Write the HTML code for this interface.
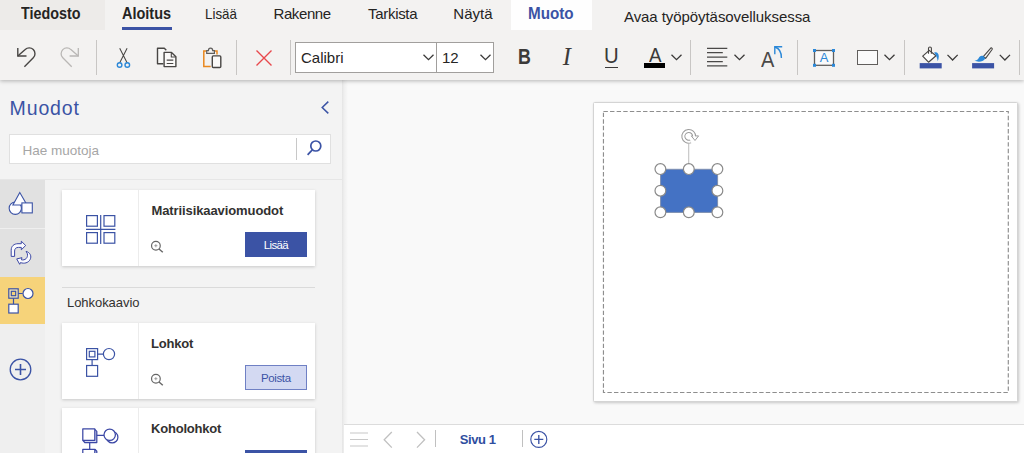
<!DOCTYPE html>
<html lang="fi">
<head>
<meta charset="utf-8">
<title>Visio</title>
<style>
*{box-sizing:border-box;margin:0;padding:0}
html,body{width:1024px;height:453px;overflow:hidden;background:#f9f9f9;font-family:"Liberation Sans",sans-serif;color:#252423}
.abs{position:absolute}
.t{position:absolute;white-space:nowrap;line-height:1}
#ribbon{position:absolute;left:0;top:0;width:1024px;height:80px;background:#f3f2f1;box-shadow:0 1px 4px rgba(0,0,0,.28);z-index:5}
.tabbg{position:absolute;top:0;height:30px}
.sep{position:absolute;top:40px;height:35px;width:1px;background:#c8c6c4}
svg{position:absolute;overflow:visible}
#panel{position:absolute;left:0;top:80px;width:342px;height:373px;background:#f3f3f3}
.card{position:absolute;left:62px;width:253px;background:#fff;box-shadow:0 1px 3px rgba(0,0,0,.18)}
.card .dv{position:absolute;left:76px;top:0;bottom:0;width:1px;background:#ececec}
.btn{position:absolute;left:183.200px;width:61.400px;height:24.500px;font-size:11.500px;text-align:center;line-height:27px;letter-spacing:-.6px}
.btn.add{background:#3b53a5;color:#fff}
.btn.rem{background:#d3d9f2;color:#3b53a5;border:1px solid #6f80c4;line-height:25.500px;height:25px;letter-spacing:-.4px}
</style>
</head>
<body>
<!-- RIBBON -->
<div id="ribbon">
  <div class="tabbg" style="left:0;width:105px;background:#edebe9"></div>
  <div class="tabbg" style="left:511px;width:81px;background:#fefefe"></div>
  <span class="t" id="t1" style="left:20.700px;top:6.400px;font-size:16px;font-weight:bold;transform:scaleX(.896);transform-origin:0 0">Tiedosto</span>
  <span class="t" id="t2" style="left:122.200px;top:6.400px;font-size:16px;font-weight:bold;transform:scaleX(.904);transform-origin:0 0">Aloitus</span>
  <div class="abs" style="left:122px;top:27px;width:50px;height:3px;background:#3b53a5"></div>
  <span class="t" id="t3" style="left:205.200px;top:6px;font-size:15px;transform:scaleX(.89);transform-origin:0 0">Lisää</span>
  <span class="t" id="t4" style="left:273.500px;top:6px;font-size:15px;letter-spacing:-.4px">Rakenne</span>
  <span class="t" id="t5" style="left:368px;top:6px;font-size:15px;letter-spacing:-.3px">Tarkista</span>
  <span class="t" id="t6" style="left:453.300px;top:6px;font-size:15px">Näytä</span>
  <span class="t" id="t7" style="left:528.300px;top:6.400px;font-size:16px;font-weight:bold;color:#3b53a5;transform:scaleX(.952);transform-origin:0 0">Muoto</span>
  <span class="t" id="t8" style="left:624px;top:9px;font-size:15px;letter-spacing:-.07px">Avaa työpöytäsovelluksessa</span>

  <div class="sep" style="left:96px"></div>
  <div class="sep" style="left:236px"></div>
  <div class="sep" style="left:290px"></div>
  <div class="sep" style="left:690px"></div>
  <div class="sep" style="left:797px"></div>
  <div class="sep" style="left:904px"></div>
  <div class="sep" style="left:1019px"></div>

  <!-- undo redo cut copy paste -->
  <svg style="left:0;top:40px" width="236" height="36" viewBox="0 40 236 36" fill="none" stroke-linecap="butt">
    <g stroke="#484644" stroke-width="1.400">
      <path d="M17.800 47.900V56H26.500"/>
      <path d="M17.800 56L25.200 49.600A5.600 5.600 0 0 1 33.300 57.700L24.400 66.800"/>
    </g>
    <g stroke="#b9b7b5" stroke-width="1.300">
      <path d="M78.300 47.900V56H69.600"/>
      <path d="M78.300 56L70.900 49.600A5.600 5.600 0 0 0 62.800 57.700L71.700 66.800"/>
    </g>
    <!-- cut -->
    <path d="M119.700 48.200L127.200 63M127.100 48.200L119.600 63" stroke="#484644" stroke-width="1.050"/>
    <circle cx="119.600" cy="65" r="2.300" stroke="#2b88d8" stroke-width="1.400"/>
    <circle cx="127.300" cy="65" r="2.300" stroke="#2b88d8" stroke-width="1.400"/>
    <!-- copy -->
    <g stroke="#484644" stroke-width="1.400" stroke-linejoin="round">
      <path d="M163.400 63.800H157.500V48.300H164.300L166.300 50.300" fill="#f8f8f7"/>
      <path d="M164.100 52.400H171.500L175.900 56.800V66.600H164.100Z" fill="#faf9f8"/>
      <path d="M171.300 52.600V57H175.700" stroke-width="1.100"/>
      <path d="M166.700 60.100H173.300M166.700 63.500H173.300" stroke-width="1.150"/>
    </g>
    <!-- paste -->
    <path d="M210.700 66.600H203.800V50.900H206.500M214.300 50.900H217V54.500" stroke="#e8871e" stroke-width="1.500"/>
    <path d="M206.700 53.300V50.700H208.400C208.400 49 209.500 48.100 210.550 48.100S212.700 49 212.700 50.700H214.400V53.300Z" stroke="#605e5c" stroke-width="1.200" fill="#f3f2f1"/>
    <rect x="212.300" y="55.900" width="8.500" height="11.600" rx="1" stroke="#484644" stroke-width="1.400" fill="#faf9f8"/>
  </svg>
  <!-- delete X -->
  <svg style="left:256px;top:50px" width="16" height="16" viewBox="0 0 16 16" fill="none" stroke="#e8484c" stroke-width="1.400">
    <path d="M.500 .500l15 15M15.500 .500l-15 15"/>
  </svg>
  <!-- font box -->
  <div class="abs" style="left:295px;top:42px;width:199px;height:31px;background:#fff;border:1px solid #a19f9d"></div>
  <div class="abs" style="left:436px;top:42px;width:1px;height:31px;background:#a19f9d"></div>
  <span class="t" id="t9" style="left:301px;top:49.500px;font-size:15px">Calibri</span>
  <span class="t" id="t10" style="left:442px;top:49.500px;font-size:15px">12</span>
  <svg class="chev" style="left:423px;top:54px" width="11" height="7" viewBox="0 0 11 7" fill="none" stroke="#3b3a39" stroke-width="1.300"><path d="M.500 .700l5 5 5-5"/></svg>
  <svg class="chev" style="left:480px;top:54px" width="11" height="7" viewBox="0 0 11 7" fill="none" stroke="#3b3a39" stroke-width="1.300"><path d="M.500 .700l5 5 5-5"/></svg>
  <!-- B I U -->
  <span class="t" id="tB" style="left:518.400px;top:46.200px;font-size:21.700px;font-weight:bold;color:#3b3a39;transform:scaleX(.82);transform-origin:0 0">B</span>
  <span class="t" id="tI" style="left:562.700px;top:45.300px;font-size:24.500px;font-style:italic;font-family:'Liberation Serif',serif;color:#3b3a39">I</span>
  <span class="t" id="tU" style="left:603.500px;top:46.100px;font-size:21.400px;color:#3b3a39;transform:scaleX(.95);transform-origin:0 0">U</span>
  <div class="abs" style="left:605px;top:66.700px;width:13px;height:1px;background:#3b3a39"></div>
  <!-- font color -->
  <span class="t" id="tA" style="left:648.700px;top:45.500px;font-size:19.500px;color:#3b3a39;transform:scaleX(.96);transform-origin:0 0">A</span>
  <div class="abs" style="left:643.700px;top:62.900px;width:21.800px;height:5.300px;background:#000"></div>
  <svg class="chev" style="left:671px;top:54px" width="11" height="7" viewBox="0 0 11 7" fill="none" stroke="#3b3a39" stroke-width="1.300"><path d="M.500 .700l5 5 5-5"/></svg>
  <!-- align -->
  <svg style="left:707px;top:47px" width="21" height="20" viewBox="0 0 21 20" fill="none" stroke="#4a4948" stroke-width="1.250"><path d="M0 1.300h20.300M0 5.600h15.800M0 10.100h20.300M0 14.500h15.800M0 18.900h20.300"/></svg>
  <svg class="chev" style="left:733.500px;top:54px" width="11" height="7" viewBox="0 0 11 7" fill="none" stroke="#3b3a39" stroke-width="1.300"><path d="M.500 .700l5 5 5-5"/></svg>
  <!-- A with arrow -->
  <span class="t" id="tA2" style="left:760.700px;top:50px;font-size:21.500px;color:#4a4948;transform:scaleX(.93);transform-origin:0 0">A</span>
  <svg style="left:774px;top:46px" width="10" height="13" viewBox="0 0 10 13" fill="none" stroke="#2b88d8" stroke-width="1.400"><path d="M.800 8.200V.800h7.400"/><path d="M1 1C5.500 2.500 7.500 6 7.400 12"/></svg>
  <!-- text box -->
  <svg style="left:813.200px;top:48.800px" width="22" height="18" viewBox="0 0 22 18" fill="none">
    <rect x="1.500" y="1.500" width="19" height="14.800" stroke="#605e5c" stroke-width="1.300" fill="#fafafa"/>
    <g fill="#2b88d8"><rect x="0" y="0" width="3" height="3"/><rect x="19" y="0" width="3" height="3"/><rect x="0" y="14.800" width="3" height="3"/><rect x="19" y="14.800" width="3" height="3"/></g>
    <text x="11.100" y="13.400" font-size="13" text-anchor="middle" fill="#2b88d8" font-family="Liberation Sans, sans-serif">A</text>
  </svg>
  <!-- rect -->
  <div class="abs" style="left:857.300px;top:49.700px;width:20.600px;height:15.600px;border:1.400px solid #605e5c;background:#fafafa"></div>
  <svg class="chev" style="left:884px;top:54px" width="11" height="7" viewBox="0 0 11 7" fill="none" stroke="#3b3a39" stroke-width="1.300"><path d="M.500 .700l5 5 5-5"/></svg>
  <!-- fill -->
  <svg style="left:910px;top:40px" width="114" height="36" viewBox="910 40 114 36" fill="none">
    <path d="M929.200 50.400L922.700 56.100L928.500 62.200L936 55.700Z" stroke="#484644" stroke-width="1.200" fill="#fdfdfd" stroke-linejoin="round"/>
    <path d="M928.500 53.800V48.300C928.500 46.600 931.400 46.600 931.400 48.300V53.800" stroke="#484644" stroke-width="1.100"/>
    <path d="M934.100 52.600C936.600 51.300 938.900 53.200 938.800 56.400C938.700 58.300 938.300 59.900 937.700 61.300C937.300 58.300 936.500 55.800 934.100 52.600Z" fill="#2b88d8"/>
    <rect x="919.700" y="63.100" width="22" height="5.300" fill="#3b53a5"/>
    <!-- brush -->
    <path d="M991.200 47.700C992.200 48.200 992.500 48.800 992.100 49.500L985.600 58.300L983.300 56.600Z" stroke="#484644" stroke-width="1.100" fill="#f3f2f1" stroke-linejoin="round"/>
    <path d="M983.200 56.100C981 55.300 979.400 56.600 978.600 58.200C977.800 59.700 976.300 60.600 974.500 60.600C977.500 62.400 982.900 62.300 985.300 58.600Z" fill="#2b88d8"/>
    <rect x="972.100" y="63.100" width="22" height="5.300" fill="#3b53a5"/>
    <g stroke="#3b3a39" stroke-width="1.300"><path d="M947.500 54.900l5.100 5.100 5.100-5.100"/><path d="M999.800 54.900l5.100 5.100 5.100-5.100"/></g>
  </svg>
</div>

<!-- LEFT PANEL -->
<div id="panel">
  <span class="t" id="p1" style="left:9.600px;top:18.500px;font-size:19.500px;color:#3b53a5;letter-spacing:.85px">Muodot</span>
  <svg style="left:321px;top:21.400px" width="8" height="13" viewBox="0 0 8 13" fill="none" stroke="#3b53a5" stroke-width="1.500"><path d="M7.300 .600L1.200 6.500l6.100 5.900"/></svg>
  <div class="abs" style="left:8.500px;top:53.700px;width:322.200px;height:30.500px;background:#fff;border:1px solid #e0e0e0"></div>
  <span class="t" id="p2" style="left:22.500px;top:63.500px;font-size:13.500px;color:#a6a6a6">Hae muotoja</span>
  <div class="abs" style="left:296px;top:58px;width:1px;height:22px;background:#c8c8c8"></div>
  <svg style="left:307.200px;top:60.200px" width="15" height="16" viewBox="0 0 15 16" fill="none" stroke="#3b53a5" stroke-width="1.700"><circle cx="8.800" cy="6" r="5"/><path d="M5.300 9.800L.600 14.800"/></svg>
  <div class="abs" style="left:0;top:99px;width:342px;height:1px;background:#e6e6e6"></div>
  <!-- side nav -->
  <div class="abs" style="left:0;top:100px;width:44.500px;height:273px;background:#efefef"></div>
  <div class="abs" style="left:0;top:100px;width:44.500px;height:47.500px;background:#e1e1e1"></div>
  <div class="abs" style="left:0;top:148.500px;width:44.500px;height:48.500px;background:#e1e1e1"></div>
  <div class="abs" style="left:0;top:197px;width:44.500px;height:47px;background:#f6d37a"></div>

  <!-- side icons -->
  <svg style="left:4px;top:106px" width="36" height="38" viewBox="4 186 36 38" fill="#fdfdff" stroke="#3b53a5" stroke-width="1.100" stroke-linejoin="miter">
    <circle cx="15.300" cy="208.200" r="6.150"/>
    <path d="M19.800 192.500L12.900 205H27L19.800 192.500Z"/>
    <rect x="21.900" y="202.900" width="10.400" height="10"/>
  </svg>
  <svg style="left:4px;top:154px" width="36" height="38" viewBox="4 234 36 38" fill="#fbfbfe" stroke="#3b47a5" stroke-width="1" stroke-linejoin="round">
    <path d="M11.200 256.400V250.200C11.200 246 14 243.700 18 243.700H21.300V241.200L25.700 245.500L21.300 249.800V247.400H18.500C16 247.400 14.600 248.600 14.600 251V256.400Z"/>
    <path d="M16.700 258.900L22 257.700L21.400 259.800C25 260.600 28.200 258 27.400 253.800L26.100 251.300C30.200 252.600 31.900 256.200 30.100 259.600C28.200 263 24.200 263.900 20.500 262.600L19.700 264.300Z"/>
  </svg>
  <svg style="left:8px;top:208px" width="26" height="26" viewBox="0 0 26 26" fill="none" stroke="#3b53a5" stroke-width="1.200">
    <rect x=".800" y=".800" width="9.400" height="9.400" fill="#fbe9b8"/><rect x="3.300" y="3.300" width="4.400" height="4.400" fill="#f6d37a"/>
    <path d="M10.200 5.500h4.500M5.500 10.200v6"/>
    <circle cx="20" cy="5.500" r="5" fill="#fff"/>
    <rect x=".800" y="16.200" width="9.400" height="8.800" fill="#fff"/>
  </svg>
  <svg style="left:8.200px;top:277.100px" width="25" height="25" viewBox="0 0 25 25" fill="none" stroke="#3b53a5" stroke-width="1.300">
    <circle cx="12.500" cy="12.500" r="10.300"/><path d="M12.500 7v11M7 12.500h11" stroke-width="1.600"/>
  </svg>

  <!-- card 1 -->
  <div class="card" style="top:110px;height:76px">
    <div class="dv"></div>
    <svg style="left:24px;top:25px" width="30" height="29" viewBox="0 0 30 29" fill="none" stroke="#3b53a5" stroke-width="1.200">
      <rect x=".600" y=".600" width="10.800" height="10.600"/><rect x="18" y=".600" width="10.800" height="10.600"/>
      <rect x=".600" y="17.600" width="10.800" height="10.600"/><rect x="18" y="17.600" width="10.800" height="10.600"/>
      <path d="M14.700 0v29M0 14.400h29.400"/>
    </svg>
    <span class="t" id="c1" style="left:89.500px;top:13.500px;font-size:13px;font-weight:bold;color:#323130;letter-spacing:-.1px">Matriisikaaviomuodot</span>
    <svg class="mag" style="left:89px;top:51.100px" width="13" height="13" viewBox="0 0 13 13" fill="none" stroke="#666" stroke-width="1.200"><circle cx="4.900" cy="4.800" r="4.350"/><path d="M8 7.900l3.800 3.400" stroke-width="1.400"/><path d="M3.300 4.700h3.100M4.850 3.150v3.100" stroke="#8a8a8a" stroke-width=".800"/></svg>
    <div class="btn add" style="top:42px"><span id="b1">Lisää</span></div>
  </div>
  <div class="abs" style="left:62px;top:207px;width:253px;height:1px;background:#dadada"></div>
  <span class="t" id="c0" style="left:67px;top:216.200px;font-size:13px;color:#323130;letter-spacing:-.05px">Lohkokaavio</span>
  <!-- card 2 -->
  <div class="card" style="top:243px;height:76px">
    <div class="dv"></div>
    <svg style="left:24px;top:25px" width="30" height="30" viewBox="0 0 30 30" fill="none" stroke="#3b53a5" stroke-width="1.200">
      <rect x=".600" y=".600" width="11" height="11"/><rect x="3.300" y="3.300" width="5.600" height="5.600"/>
      <path d="M11.600 6.100h5.500M6.100 11.600v5.900"/>
      <circle cx="23" cy="6.100" r="5.600"/>
      <rect x=".600" y="17.500" width="11" height="10.800"/>
    </svg>
    <span class="t" id="c2" style="left:89px;top:13.500px;font-size:13px;font-weight:bold;color:#323130;letter-spacing:-.2px">Lohkot</span>
    <svg class="mag" style="left:89px;top:50.700px" width="13" height="13" viewBox="0 0 13 13" fill="none" stroke="#666" stroke-width="1.200"><circle cx="4.900" cy="4.800" r="4.350"/><path d="M8 7.900l3.800 3.400" stroke-width="1.400"/><path d="M3.300 4.700h3.100M4.850 3.150v3.100" stroke="#8a8a8a" stroke-width=".800"/></svg>
    <div class="btn rem" style="top:41.500px"><span id="b2">Poista</span></div>
  </div>
  <!-- card 3 -->
  <div class="card" style="top:328px;height:76px">
    <div class="dv"></div>
    <svg style="left:8px;top:7px" width="60" height="45" viewBox="70 415 60 45" fill="none" stroke="#3b47a5" stroke-width="1.250" stroke-linejoin="round">
      <path d="M94.800 429.400L96.800 431.400V442.500H84.800L82.800 440.300" fill="#d3d7f0"/>
      <rect x="82.800" y="428.900" width="12" height="11.400" fill="#fff"/>
      <circle cx="112.200" cy="437.200" r="5.700" fill="#fff"/>
      <circle cx="109.700" cy="434.800" r="5.700" fill="#fff"/>
      <path d="M96.800 435.400H104M89.700 442.500V449"/>
      <path d="M94.800 449.300L96.800 451.300V462H84.800L82.800 460" fill="#d3d7f0"/>
      <rect x="82.800" y="449.300" width="12" height="11.400" fill="#fff"/>
    </svg>
    <span class="t" id="c3" style="left:89px;top:13.500px;font-size:13px;font-weight:bold;color:#323130;letter-spacing:-.2px">Koholohkot</span>
    <div class="btn add" style="top:42px"><span>Lisää</span></div>
  </div>
</div>

<!-- CANVAS -->
<div class="abs" style="left:342px;top:80px;width:6px;height:373px;background:linear-gradient(to right,#e4e4e4,#efefef 35%,#f9f9f9)"></div>
<div id="page" class="abs" style="left:593.400px;top:101.800px;width:424.500px;height:300.400px;background:#fff;border:1.500px solid #d4d4d4;border-radius:1.500px;box-shadow:1px 1px 3px rgba(0,0,0,.2)"></div>
<svg style="left:600px;top:108px" width="412" height="288" viewBox="600 108 412 288" fill="none"><rect x="603.450" y="111.450" width="404.850" height="281.050" stroke="#8e8e8e" stroke-width="1.150" stroke-dasharray="4.400 2.200"/></svg>
<div id="bottombar" class="abs" style="left:344px;top:424px;width:680px;height:29px;background:#fff;border-top:1px solid #dcdcdc"></div>

<!-- shape -->
<svg style="left:640px;top:120px" width="100" height="110" viewBox="640 120 100 110" fill="none">
  <path d="M688.700 144V164" stroke="#c2c2c2" stroke-width="1.100"/>
  <rect x="660.600" y="169.300" width="57" height="43.100" fill="#4472c4" stroke="#7d8eb0" stroke-width="1"/>
  <g fill="#fff" stroke="#8a8a8a" stroke-width="1.200">
    <circle cx="660.400" cy="169.100" r="5.400"/><circle cx="688.800" cy="169.100" r="5.400"/><circle cx="717.400" cy="169.100" r="5.400"/>
    <circle cx="660.400" cy="190.700" r="5.400"/><circle cx="717.400" cy="190.700" r="5.400"/>
    <circle cx="660.400" cy="212.300" r="5.400"/><circle cx="688.800" cy="212.300" r="5.400"/><circle cx="717.400" cy="212.300" r="5.400"/>
  </g>
  <path d="M694.100 136.700A5.400 5.400 0 1 0 690.600 141.400" stroke="#9c9c9c" stroke-width="4"/>
  <path d="M691.300 135.900H698.600L695 140.500Z" fill="#fff" stroke="#9c9c9c" stroke-width="1" stroke-linejoin="round"/>
  <path d="M694.100 137A5.400 5.400 0 1 0 690.800 141.300" stroke="#fff" stroke-width="2"/>
</svg>

<svg style="left:350px;top:430px" width="200" height="20" viewBox="350 430 200 20" fill="none">
  <path d="M350 433h18M350 439.500h18M350 446h18" stroke="#c8c8c8" stroke-width="1.200"/>
  <path d="M391.800 432l-7.600 7.800 7.600 7.800" stroke="#c0c0c0" stroke-width="1.300"/>
  <path d="M417 432l7.600 7.800-7.600 7.800" stroke="#c0c0c0" stroke-width="1.300"/>
  <path d="M435.500 430v17M522.500 430v17" stroke="#c0c0c0" stroke-width="1"/>
  <circle cx="538.800" cy="439.400" r="8" stroke="#3b53a5" stroke-width="1.150"/>
  <path d="M538.800 435v9M534.300 439.400h9" stroke="#3b53a5" stroke-width="1.350"/>
</svg>
<span class="t" id="sv" style="left:459.700px;top:433px;font-size:13px;font-weight:bold;color:#2f4ea0;letter-spacing:-.4px">Sivu 1</span>
</body>
</html>
